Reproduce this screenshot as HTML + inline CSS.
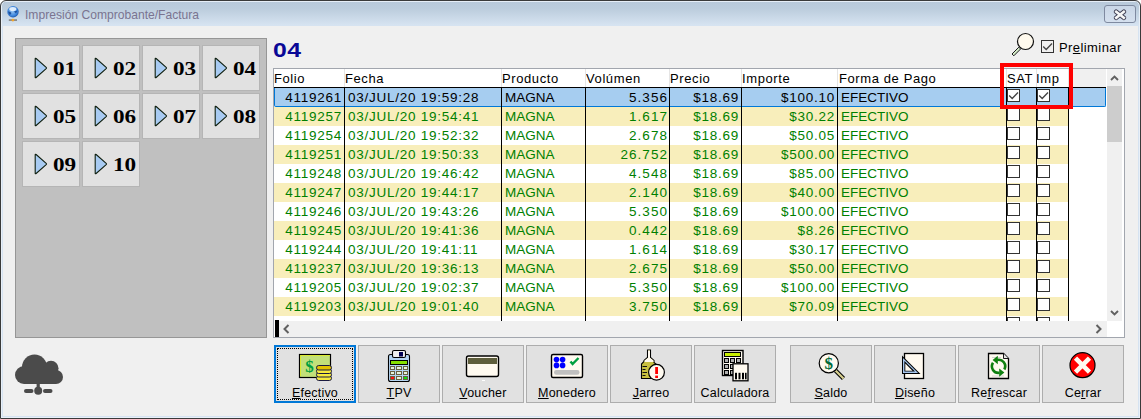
<!DOCTYPE html>
<html><head><meta charset="utf-8">
<style>
*{margin:0;padding:0;box-sizing:border-box}
html,body{width:1141px;height:419px;overflow:hidden;background:#fff}
body{position:relative;font-family:"Liberation Sans",sans-serif}
.a{position:absolute}
#frame{position:absolute;left:0;top:0;width:1141px;height:419px;border:1px solid #3a3a3a;border-radius:6px 6px 0 0;background:linear-gradient(#e6eef7 0,#e6eef7 1px,#b8c9da 1px,#bccddd 8px,#d6e3f1 24px,#d6e3f1 100%);box-shadow:inset 1px 0 0 #e9f0f8,inset -1px 0 0 #e9f0f8,inset 0 -1px 0 #e9f0f8}
#client{position:absolute;left:3px;top:26px;width:1135px;height:390px;background:#f0f0f0}
#title{position:absolute;left:25px;top:8px;font-size:12.1px;color:#7a7490;white-space:nowrap}
#closebtn{position:absolute;left:1104px;top:5px;width:32px;height:18px;border:1px solid #7f8aa0;border-radius:3px;background:linear-gradient(#c9d6e6,#d5e0ee)}
#panel{position:absolute;left:15px;top:38px;width:252px;height:300px;background:#c0c0c0;border:1px solid #969696}
.pb{position:absolute;width:58px;height:46px;background:#e1e1e1;border:1px solid #b5b5b5}
.pb svg{position:absolute;left:11px;top:11px}
.one{position:relative;font-weight:bold}

.pb span{position:absolute;left:30px;top:12px;font-family:"Liberation Serif",serif;font-weight:bold;font-size:19px;letter-spacing:0px;transform:scaleX(1.22);transform-origin:0 0;color:#000}
#hdr04{position:absolute;left:273px;top:38px;font-weight:bold;font-size:21px;color:#0a0896;letter-spacing:0.5px;transform:scaleX(1.18);transform-origin:0 0}
#table{position:absolute;left:273px;top:68px;width:852px;height:270px;border:1px solid #a2a6ae;background:#fff;overflow:hidden}
.hd{position:absolute;top:71px;font-size:13px;letter-spacing:0.6px;color:#000;white-space:nowrap}
.hdiv{position:absolute;top:69px;width:1px;height:18px;background:#e5e5e5}
.row{position:absolute;left:0;width:1141px;height:19px}
.row .bg{position:absolute;left:274px;top:0;height:19px;width:795px}
.row.y .bg{background:#f8eebb}
.row.w .bg{background:#fff}
.row.sel .bg{width:832px;background:#a6cdf0;border:1px solid #0078d7;border-top:none;border-radius:0 0 2px 2px}
.c{position:absolute;top:2px;font-size:13.5px;letter-spacing:0.2px;color:#008000;white-space:nowrap}

.sel .c{color:#000}
.c.r{text-align:right}
.c.n{letter-spacing:0.74px}
.c.v{letter-spacing:1.04px}
.c.m{letter-spacing:0px}
.cb{position:absolute;top:1px;width:13px;height:13px;border:1px solid #333;background:#fff}
.cb svg{position:absolute;left:0;top:0}
.vdiv{position:absolute;top:87px;width:1px;height:234px;background:#000}
.bb{position:absolute;top:345px;width:82px;height:58px;background:#e1e1e1;border:1px solid #adadad}
.bb .lbl{position:absolute;left:0;width:100%;top:39.5px;text-align:center;font-size:12.5px;letter-spacing:0.2px;color:#000;white-space:nowrap}
.bb svg{position:absolute;left:25px;top:6px}
u{text-decoration:underline;text-decoration-thickness:1px;text-underline-offset:0.5px}
</style></head><body>
<div id="frame"></div>
<div id="client"></div>
<!-- title icon -->
<svg class="a" style="left:6px;top:5px" width="16" height="18" viewBox="0 0 16 18">
<defs><radialGradient id="gl" cx="0.45" cy="0.45" r="0.6"><stop offset="0" stop-color="#9cc8f4"/><stop offset="0.7" stop-color="#3a84dc"/><stop offset="1" stop-color="#1a4a9a"/></radialGradient></defs>
<circle cx="7" cy="6.7" r="5.7" fill="url(#gl)"/>
<ellipse cx="6.8" cy="4" rx="3.6" ry="2" fill="#eaf4ff" opacity="0.9"/>
<path d="M2 6.5 Q4 6 5.5 8 L4 10 Q2.5 9 2 6.5Z M8 6.5 L11.5 5.5 L10 8.5 Z" fill="#1c4f9c"/>
<rect x="2.8" y="14.2" width="8.2" height="1.8" fill="#8c8c8c"/><circle cx="6.9" cy="15.1" r="1.4" fill="#f2a428"/>
</svg>
<div id="title">Impresión Comprobante/Factura</div>
<div id="closebtn"><svg class="a" style="left:8px;top:3px" width="14" height="12" viewBox="0 0 14 12"><path d="M3.2 2.8 L10.8 8.8 M10.8 2.8 L3.2 8.8" stroke="#3c3c50" stroke-width="4.6" stroke-linecap="round"/><path d="M3.2 2.8 L10.8 8.8 M10.8 2.8 L3.2 8.8" stroke="#f6f6f6" stroke-width="2.6" stroke-linecap="square"/></svg></div>

<div id="panel"></div>
<div class="pb" style="left:22px;top:45px"><svg width="14" height="22" viewBox="0 0 14 22"><path d="M1.2 1.8 Q1.2 0.8 2.1 1.5 L12.2 10.3 Q12.9 11 12.2 11.7 L2.1 20.5 Q1.2 21.2 1.2 20.2 Z" fill="#a8cbf2" stroke="#102010" stroke-width="1.1" stroke-linejoin="round"/></svg><span>01</span></div>
<div class="pb" style="left:82px;top:45px"><svg width="14" height="22" viewBox="0 0 14 22"><path d="M1.2 1.8 Q1.2 0.8 2.1 1.5 L12.2 10.3 Q12.9 11 12.2 11.7 L2.1 20.5 Q1.2 21.2 1.2 20.2 Z" fill="#a8cbf2" stroke="#102010" stroke-width="1.1" stroke-linejoin="round"/></svg><span>02</span></div>
<div class="pb" style="left:142px;top:45px"><svg width="14" height="22" viewBox="0 0 14 22"><path d="M1.2 1.8 Q1.2 0.8 2.1 1.5 L12.2 10.3 Q12.9 11 12.2 11.7 L2.1 20.5 Q1.2 21.2 1.2 20.2 Z" fill="#a8cbf2" stroke="#102010" stroke-width="1.1" stroke-linejoin="round"/></svg><span>03</span></div>
<div class="pb" style="left:202px;top:45px"><svg width="14" height="22" viewBox="0 0 14 22"><path d="M1.2 1.8 Q1.2 0.8 2.1 1.5 L12.2 10.3 Q12.9 11 12.2 11.7 L2.1 20.5 Q1.2 21.2 1.2 20.2 Z" fill="#a8cbf2" stroke="#102010" stroke-width="1.1" stroke-linejoin="round"/></svg><span>04</span></div>
<div class="pb" style="left:22px;top:93px"><svg width="14" height="22" viewBox="0 0 14 22"><path d="M1.2 1.8 Q1.2 0.8 2.1 1.5 L12.2 10.3 Q12.9 11 12.2 11.7 L2.1 20.5 Q1.2 21.2 1.2 20.2 Z" fill="#a8cbf2" stroke="#102010" stroke-width="1.1" stroke-linejoin="round"/></svg><span>05</span></div>
<div class="pb" style="left:82px;top:93px"><svg width="14" height="22" viewBox="0 0 14 22"><path d="M1.2 1.8 Q1.2 0.8 2.1 1.5 L12.2 10.3 Q12.9 11 12.2 11.7 L2.1 20.5 Q1.2 21.2 1.2 20.2 Z" fill="#a8cbf2" stroke="#102010" stroke-width="1.1" stroke-linejoin="round"/></svg><span>06</span></div>
<div class="pb" style="left:142px;top:93px"><svg width="14" height="22" viewBox="0 0 14 22"><path d="M1.2 1.8 Q1.2 0.8 2.1 1.5 L12.2 10.3 Q12.9 11 12.2 11.7 L2.1 20.5 Q1.2 21.2 1.2 20.2 Z" fill="#a8cbf2" stroke="#102010" stroke-width="1.1" stroke-linejoin="round"/></svg><span>07</span></div>
<div class="pb" style="left:202px;top:93px"><svg width="14" height="22" viewBox="0 0 14 22"><path d="M1.2 1.8 Q1.2 0.8 2.1 1.5 L12.2 10.3 Q12.9 11 12.2 11.7 L2.1 20.5 Q1.2 21.2 1.2 20.2 Z" fill="#a8cbf2" stroke="#102010" stroke-width="1.1" stroke-linejoin="round"/></svg><span>08</span></div>
<div class="pb" style="left:22px;top:141px"><svg width="14" height="22" viewBox="0 0 14 22"><path d="M1.2 1.8 Q1.2 0.8 2.1 1.5 L12.2 10.3 Q12.9 11 12.2 11.7 L2.1 20.5 Q1.2 21.2 1.2 20.2 Z" fill="#a8cbf2" stroke="#102010" stroke-width="1.1" stroke-linejoin="round"/></svg><span>09</span></div>
<div class="pb" style="left:82px;top:141px"><svg width="14" height="22" viewBox="0 0 14 22"><path d="M1.2 1.8 Q1.2 0.8 2.1 1.5 L12.2 10.3 Q12.9 11 12.2 11.7 L2.1 20.5 Q1.2 21.2 1.2 20.2 Z" fill="#a8cbf2" stroke="#102010" stroke-width="1.1" stroke-linejoin="round"/></svg><span>10</span></div>

<div id="hdr04">04</div>
<!-- magnifier -->
<svg class="a" style="left:1010px;top:31px" width="28" height="27" viewBox="0 0 28 27">
<path d="M2 23 L8.8 16.2 L10.6 18 L3.8 24.8 Z" fill="#d4ecc8" stroke="#1a1a1a" stroke-width="1" stroke-linejoin="round"/>
<circle cx="15.5" cy="10.5" r="8" fill="#fffaee" stroke="#111" stroke-width="1.2"/>
</svg>
<div class="a" style="left:1041px;top:40px;width:13px;height:13px;border:1px solid #333;background:#f0f0f0">
<svg class="a" style="left:0;top:0" width="11" height="11" viewBox="0 0 11 11"><path d="M1.2 5.5 L4.2 8.5 L10 2.5" fill="none" stroke="#444" stroke-width="1.35"/></svg></div>
<div class="a" style="left:1059px;top:40px;font-size:13px;letter-spacing:0.42px;color:#000;white-space:nowrap">Pr<span style="text-decoration:underline">e</span>liminar</div>

<div id="table"></div>
<div class="hd" style="left:274px">Folio</div>
<div class="hd" style="left:345px">Fecha</div>
<div class="hd" style="left:502px">Producto</div>
<div class="hd" style="left:586px">Volúmen</div>
<div class="hd" style="left:670px">Precio</div>
<div class="hd" style="left:742px">Importe</div>
<div class="hd" style="left:839px">Forma de Pago</div>
<div class="hd" style="left:1007px">SAT</div>
<div class="hd" style="left:1036px">Imp</div>
<div class="a" style="left:1069px;top:69px;width:37px;height:18px;background:#f0f0f0"></div>
<div class="hdiv" style="left:344px"></div><div class="hdiv" style="left:501px"></div><div class="hdiv" style="left:585px"></div><div class="hdiv" style="left:669px"></div><div class="hdiv" style="left:741px"></div><div class="hdiv" style="left:837px"></div><div class="hdiv" style="left:1006px"></div><div class="hdiv" style="left:1036px"></div><div class="hdiv" style="left:1068px"></div>
<div class="a" style="left:274px;top:87px;width:832px;height:1px;background:#000"></div>
<div class="row sel" style="top:88px"><div class="bg"></div><span class="c r n" style="right:799px">4119261</span><span class="c n" style="left:348px">03/JUL/20 19:59:28</span><span class="c m" style="left:505px">MAGNA</span><span class="c r v" style="right:473px">5.356</span><span class="c r n" style="right:402px">$18.69</span><span class="c r n" style="right:306px">$100.10</span><span class="c m" style="left:841px">EFECTIVO</span><div class="cb" style="left:1007px"><svg width="11" height="11" viewBox="0 0 11 11"><path d="M1.2 5.5 L4.2 8.5 L10 2.5" fill="none" stroke="#444" stroke-width="1.35"/></svg></div><div class="cb" style="left:1037px"><svg width="11" height="11" viewBox="0 0 11 11"><path d="M1.2 5.5 L4.2 8.5 L10 2.5" fill="none" stroke="#444" stroke-width="1.35"/></svg></div></div>
<div class="row y" style="top:107px"><div class="bg"></div><span class="c r n" style="right:799px">4119257</span><span class="c n" style="left:348px">03/JUL/20 19:54:41</span><span class="c m" style="left:505px">MAGNA</span><span class="c r v" style="right:473px">1.617</span><span class="c r n" style="right:402px">$18.69</span><span class="c r n" style="right:306px">$30.22</span><span class="c m" style="left:841px">EFECTIVO</span><div class="cb" style="left:1007px"></div><div class="cb" style="left:1037px"></div></div>
<div class="row w" style="top:126px"><div class="bg"></div><span class="c r n" style="right:799px">4119254</span><span class="c n" style="left:348px">03/JUL/20 19:52:32</span><span class="c m" style="left:505px">MAGNA</span><span class="c r v" style="right:473px">2.678</span><span class="c r n" style="right:402px">$18.69</span><span class="c r n" style="right:306px">$50.05</span><span class="c m" style="left:841px">EFECTIVO</span><div class="cb" style="left:1007px"></div><div class="cb" style="left:1037px"></div></div>
<div class="row y" style="top:145px"><div class="bg"></div><span class="c r n" style="right:799px">4119251</span><span class="c n" style="left:348px">03/JUL/20 19:50:33</span><span class="c m" style="left:505px">MAGNA</span><span class="c r v" style="right:473px">26.752</span><span class="c r n" style="right:402px">$18.69</span><span class="c r n" style="right:306px">$500.00</span><span class="c m" style="left:841px">EFECTIVO</span><div class="cb" style="left:1007px"></div><div class="cb" style="left:1037px"></div></div>
<div class="row w" style="top:164px"><div class="bg"></div><span class="c r n" style="right:799px">4119248</span><span class="c n" style="left:348px">03/JUL/20 19:46:42</span><span class="c m" style="left:505px">MAGNA</span><span class="c r v" style="right:473px">4.548</span><span class="c r n" style="right:402px">$18.69</span><span class="c r n" style="right:306px">$85.00</span><span class="c m" style="left:841px">EFECTIVO</span><div class="cb" style="left:1007px"></div><div class="cb" style="left:1037px"></div></div>
<div class="row y" style="top:183px"><div class="bg"></div><span class="c r n" style="right:799px">4119247</span><span class="c n" style="left:348px">03/JUL/20 19:44:17</span><span class="c m" style="left:505px">MAGNA</span><span class="c r v" style="right:473px">2.140</span><span class="c r n" style="right:402px">$18.69</span><span class="c r n" style="right:306px">$40.00</span><span class="c m" style="left:841px">EFECTIVO</span><div class="cb" style="left:1007px"></div><div class="cb" style="left:1037px"></div></div>
<div class="row w" style="top:202px"><div class="bg"></div><span class="c r n" style="right:799px">4119246</span><span class="c n" style="left:348px">03/JUL/20 19:43:26</span><span class="c m" style="left:505px">MAGNA</span><span class="c r v" style="right:473px">5.350</span><span class="c r n" style="right:402px">$18.69</span><span class="c r n" style="right:306px">$100.00</span><span class="c m" style="left:841px">EFECTIVO</span><div class="cb" style="left:1007px"></div><div class="cb" style="left:1037px"></div></div>
<div class="row y" style="top:221px"><div class="bg"></div><span class="c r n" style="right:799px">4119245</span><span class="c n" style="left:348px">03/JUL/20 19:41:36</span><span class="c m" style="left:505px">MAGNA</span><span class="c r v" style="right:473px">0.442</span><span class="c r n" style="right:402px">$18.69</span><span class="c r n" style="right:306px">$8.26</span><span class="c m" style="left:841px">EFECTIVO</span><div class="cb" style="left:1007px"></div><div class="cb" style="left:1037px"></div></div>
<div class="row w" style="top:240px"><div class="bg"></div><span class="c r n" style="right:799px">4119244</span><span class="c n" style="left:348px">03/JUL/20 19:41:11</span><span class="c m" style="left:505px">MAGNA</span><span class="c r v" style="right:473px">1.614</span><span class="c r n" style="right:402px">$18.69</span><span class="c r n" style="right:306px">$30.17</span><span class="c m" style="left:841px">EFECTIVO</span><div class="cb" style="left:1007px"></div><div class="cb" style="left:1037px"></div></div>
<div class="row y" style="top:259px"><div class="bg"></div><span class="c r n" style="right:799px">4119237</span><span class="c n" style="left:348px">03/JUL/20 19:36:13</span><span class="c m" style="left:505px">MAGNA</span><span class="c r v" style="right:473px">2.675</span><span class="c r n" style="right:402px">$18.69</span><span class="c r n" style="right:306px">$50.00</span><span class="c m" style="left:841px">EFECTIVO</span><div class="cb" style="left:1007px"></div><div class="cb" style="left:1037px"></div></div>
<div class="row w" style="top:278px"><div class="bg"></div><span class="c r n" style="right:799px">4119205</span><span class="c n" style="left:348px">03/JUL/20 19:02:37</span><span class="c m" style="left:505px">MAGNA</span><span class="c r v" style="right:473px">5.350</span><span class="c r n" style="right:402px">$18.69</span><span class="c r n" style="right:306px">$100.00</span><span class="c m" style="left:841px">EFECTIVO</span><div class="cb" style="left:1007px"></div><div class="cb" style="left:1037px"></div></div>
<div class="row y" style="top:297px"><div class="bg"></div><span class="c r n" style="right:799px">4119203</span><span class="c n" style="left:348px">03/JUL/20 19:01:40</span><span class="c m" style="left:505px">MAGNA</span><span class="c r v" style="right:473px">3.750</span><span class="c r n" style="right:402px">$18.69</span><span class="c r n" style="right:306px">$70.09</span><span class="c m" style="left:841px">EFECTIVO</span><div class="cb" style="left:1007px"></div><div class="cb" style="left:1037px"></div></div>
<div class="row w" style="top:316px"><div class="bg"></div><div class="cb" style="left:1007px"></div><div class="cb" style="left:1037px"></div></div>
<div class="vdiv" style="left:344px"></div><div class="vdiv" style="left:501px"></div><div class="vdiv" style="left:585px"></div><div class="vdiv" style="left:669px"></div><div class="vdiv" style="left:741px"></div><div class="vdiv" style="left:837px"></div><div class="vdiv" style="left:1006px"></div><div class="vdiv" style="left:1036px"></div><div class="vdiv" style="left:1068px"></div>
<!-- vertical scrollbar -->
<div class="a" style="left:1107px;top:69px;width:15px;height:252px;background:#f0f0f0"></div>
<div class="a" style="left:1107px;top:86px;width:15px;height:56px;background:#cdcdcd"></div>
<svg class="a" style="left:1110px;top:74px" width="10" height="8" viewBox="0 0 10 8"><path d="M1 6 L4.5 2.5 L8 6" fill="none" stroke="#606060" stroke-width="1.9"/></svg>
<svg class="a" style="left:1110px;top:309px" width="10" height="8" viewBox="0 0 10 8"><path d="M1 2 L4.5 5.5 L8 2" fill="none" stroke="#606060" stroke-width="1.9"/></svg>
<!-- horizontal scrollbar -->
<div class="a" style="left:279px;top:321px;width:828px;height:16px;background:#f0f0f0"></div>
<div class="a" style="left:275px;top:320px;width:4px;height:17px;background:#000"></div>
<svg class="a" style="left:282px;top:324px" width="8" height="10" viewBox="0 0 8 10"><path d="M6.5 1 L2.5 5 L6.5 9" fill="none" stroke="#606060" stroke-width="2"/></svg>
<svg class="a" style="left:1095px;top:324px" width="8" height="10" viewBox="0 0 8 10"><path d="M1.5 1 L5.5 5 L1.5 9" fill="none" stroke="#606060" stroke-width="2"/></svg>
<!-- red highlight -->
<div class="a" style="left:1000px;top:63px;width:73px;height:46px;border:4px solid #ff0000"></div>

<!-- cloud -->
<svg class="a" style="left:14px;top:352px" width="50" height="44" viewBox="0 0 50 44">
<g fill="#4b4b4b">
<circle cx="20.5" cy="15" r="12.5"/>
<circle cx="37" cy="16.2" r="7.5"/>
<circle cx="10" cy="23" r="9"/>
<circle cx="42" cy="25" r="7"/>
<rect x="10" y="16" width="32" height="16"/>
<rect x="22.6" y="30" width="3.2" height="8"/>
<circle cx="24.2" cy="38.7" r="4"/>
<rect x="10" y="37" width="9.5" height="4" rx="2"/>
<rect x="29" y="37" width="9.5" height="4" rx="2"/>
</g></svg>

<div class="bb" style="left:274px;border:2px solid #0078d7"><div class="a" style="left:1px;top:1px;right:1px;bottom:1px;border:1px dotted #000"></div><div class="lbl" style="top:38.5px"><u>E</u>fectivo</div></div>
<div class="bb" style="left:358px"><div class="lbl"><u>T</u>PV</div></div>
<div class="bb" style="left:442px"><div class="lbl"><u>V</u>oucher</div></div>
<div class="bb" style="left:526px"><div class="lbl"><u>M</u>onedero</div></div>
<div class="bb" style="left:610px"><div class="lbl"><u>J</u>arreo</div></div>
<div class="bb" style="left:694px"><div class="lbl">Calculadora</div></div>
<div class="bb" style="left:790px"><div class="lbl"><u>S</u>aldo</div></div>
<div class="bb" style="left:874px"><div class="lbl"><u>D</u>iseño</div></div>
<div class="bb" style="left:958px"><div class="lbl">Re<u>f</u>rescar</div></div>
<div class="bb" style="left:1042px"><div class="lbl">Ce<u>r</u>rar</div></div>
<!--icons-->
<svg class="a" style="left:0;top:0" width="1141" height="419" viewBox="0 0 1141 419">
<!-- Efectivo: bill + coins -->
<rect x="299.5" y="354.5" width="31" height="23" fill="#c2e07a" stroke="#000" stroke-width="1.2"/>
<path d="M300.5 376 V355.5 H330" fill="none" stroke="#e4f020" stroke-width="0.8"/>
<text x="309.4" y="371.5" text-anchor="middle" font-family="Liberation Serif" font-weight="bold" font-size="17" fill="#00a040">$</text>
<g stroke="#1a1a40" stroke-width="1">
<rect x="316.5" y="376" width="15" height="4.5" rx="2.2" fill="#f6ea3c"/>
<rect x="316.5" y="372.5" width="15" height="4.5" rx="2.2" fill="#f6ea3c"/>
<rect x="316.5" y="369" width="15" height="4.5" rx="2.2" fill="#f6ea3c"/>
<rect x="316.5" y="365.5" width="15" height="4.5" rx="2.2" fill="#e2c200"/>
</g>
<!-- TPV -->
<rect x="388.5" y="354.5" width="21" height="27" rx="2" fill="#b4d4f2" stroke="#000" stroke-width="1.1"/>
<rect x="392.5" y="350.5" width="13" height="7" rx="1.5" fill="#efefef" stroke="#000" stroke-width="1.1"/>
<rect x="399" y="352" width="4" height="4.5" fill="#000050"/>
<rect x="390.5" y="360.5" width="17" height="4" fill="#86e000" stroke="#000" stroke-width="1"/>
<g stroke="#6a6040" stroke-width="1" fill="#e6f2dc">
<rect x="390.5" y="366.5" width="4" height="3"/><rect x="396.5" y="366.5" width="5" height="3"/><rect x="403.5" y="366.5" width="4" height="3"/>
<rect x="390.5" y="371.5" width="4" height="3"/><rect x="396.5" y="371.5" width="5" height="3"/><rect x="403.5" y="371.5" width="4" height="3"/>
<rect x="390.5" y="376.5" width="4" height="3" fill="#ff1010"/><rect x="396.5" y="376.5" width="5" height="3"/><rect x="403.5" y="376.5" width="4" height="3" fill="#10e010"/>
</g>
<!-- Voucher -->
<rect x="466.5" y="356" width="32" height="20.5" rx="2" fill="#fffaf0" stroke="#000" stroke-width="1.4"/>
<rect x="468" y="358" width="29" height="6" fill="#5e5e3c"/>
<rect x="482" y="380" width="3" height="1" fill="#fff"/>
<!-- Monedero -->
<rect x="551.5" y="354.5" width="31" height="23" rx="1.5" fill="#fffaf0" stroke="#000" stroke-width="1.4"/>
<g fill="#0000ff"><circle cx="556.5" cy="359.6" r="2.8"/><circle cx="562.6" cy="359.6" r="2.8"/><circle cx="556.5" cy="365.4" r="2.8"/><circle cx="562.6" cy="365.4" r="2.8"/></g>
<path d="M570.5 361.5 L572.6 364 L578.5 358" fill="none" stroke="#00a040" stroke-width="2.4"/>
<rect x="554" y="370" width="25.5" height="4.7" rx="2.3" fill="#c0c0c0"/>
<!-- Jarreo -->
<path d="M647.5 350 H650.5 V357.5 L654 360.5 V362.5 L656.5 364.5 V378.5 H641.5 V364 L644 361.5 V360.5 L647.5 357.5 Z" fill="#c8c040" stroke="#000" stroke-width="1.1"/>
<path d="M648 350.5 H650 V357.8 L653.5 360.6 V362 H644.5 V360.6 L648 357.8 Z" fill="#fffaf0"/>
<g stroke="#111" stroke-width="1"><path d="M642.5 366.5 H647 M642.5 369.5 H645.5 M642.5 372.5 H647 M642.5 375.5 H645.5"/></g>
<circle cx="656.5" cy="372.3" r="7.9" fill="#fffaf0" stroke="#000" stroke-width="1.2"/>
<rect x="655.2" y="367" width="2.8" height="7" fill="#ff0000"/>
<rect x="655.2" y="375.6" width="2.8" height="2.4" fill="#ff0000"/>
<!-- Calculadora -->
<rect x="722.5" y="350.5" width="20.5" height="25" fill="#fffaf0" stroke="#000" stroke-width="1.4"/>
<rect x="724.5" y="352.5" width="16" height="4" fill="#c8f000" stroke="#000" stroke-width="1"/>
<g fill="#b0b0b0" stroke="#000" stroke-width="1">
<rect x="724.5" y="358.5" width="4" height="4"/><rect x="730.5" y="358.5" width="4" height="4"/><rect x="736.5" y="358.5" width="4" height="4"/>
<rect x="724.5" y="364.5" width="4" height="4"/><rect x="730.5" y="364.5" width="4" height="4"/>
<rect x="724.5" y="370.5" width="4" height="4"/><rect x="730.5" y="370.5" width="4" height="4"/>
</g>
<rect x="733" y="363.8" width="15" height="17" fill="#fffaf0" stroke="#000" stroke-width="1.3"/>
<g fill="#000"><rect x="735" y="372.8" width="2" height="6.5"/><rect x="738.5" y="372.8" width="2" height="6.5"/><rect x="742" y="372.8" width="2" height="6.5"/><rect x="745" y="372.8" width="1.6" height="6.5"/></g>
<!-- Saldo -->
<path d="M835.5 370.5 L843.5 378.5" stroke="#000" stroke-width="4.5"/>
<path d="M835.5 370.5 L843.5 378.5" stroke="#d8d090" stroke-width="2.3"/>
<circle cx="828.8" cy="363.2" r="9.6" fill="#fffaf0" stroke="#000" stroke-width="1.2"/>
<text x="828.8" y="369" text-anchor="middle" font-family="Liberation Serif" font-weight="bold" font-size="17" fill="#006a3a">$</text>
<!-- Diseño -->
<rect x="904.5" y="353.5" width="19" height="25" fill="#fffaf0" stroke="#000" stroke-width="1.3"/>
<path d="M902 355.5 V374 H920.5 Z" fill="#000"/>
<path d="M903 357.9 V373 H918.1 Z" fill="#a8c8f0"/>
<path d="M904.4 361 V371.6 H915 Z" fill="#000"/>
<path d="M905.3 363.6 V370.8 H912.5 Z" fill="#fffaf0"/>
<!-- Refrescar -->
<path d="M988.5 353.5 H1003.5 L1008.5 358.5 V378.5 H988.5 Z" fill="#fffaf0" stroke="#000" stroke-width="1.3"/>
<path d="M1003.5 353.5 V358.5 H1008.5" fill="#e4e4e4" stroke="#000" stroke-width="0.9"/>
<g stroke="#c8c8c8" stroke-width="0.8"><path d="M992 357.5 H1001 M992 376 H1004"/></g>
<g fill="none" stroke="#108010" stroke-width="2.6">
<path d="M997 360 A6.5 6.5 0 0 1 1004.3 369.5"/>
<path d="M999.5 372.8 A6.5 6.5 0 0 1 993 362.8"/>
</g>
<path d="M992.6 360 L997.8 355.8 V364.2 Z" fill="#108010"/>
<path d="M1004.4 372.6 L999.2 368.4 V376.8 Z" fill="#108010"/>
<!-- Cerrar -->
<circle cx="1082.5" cy="365.2" r="12.5" fill="#ff0000" stroke="#000" stroke-width="1.2"/>
<path d="M1075.5 358.2 L1089.5 372.2 M1089.5 358.2 L1075.5 372.2" stroke="#fffaf0" stroke-width="4.6"/>
</svg>

</body></html>
